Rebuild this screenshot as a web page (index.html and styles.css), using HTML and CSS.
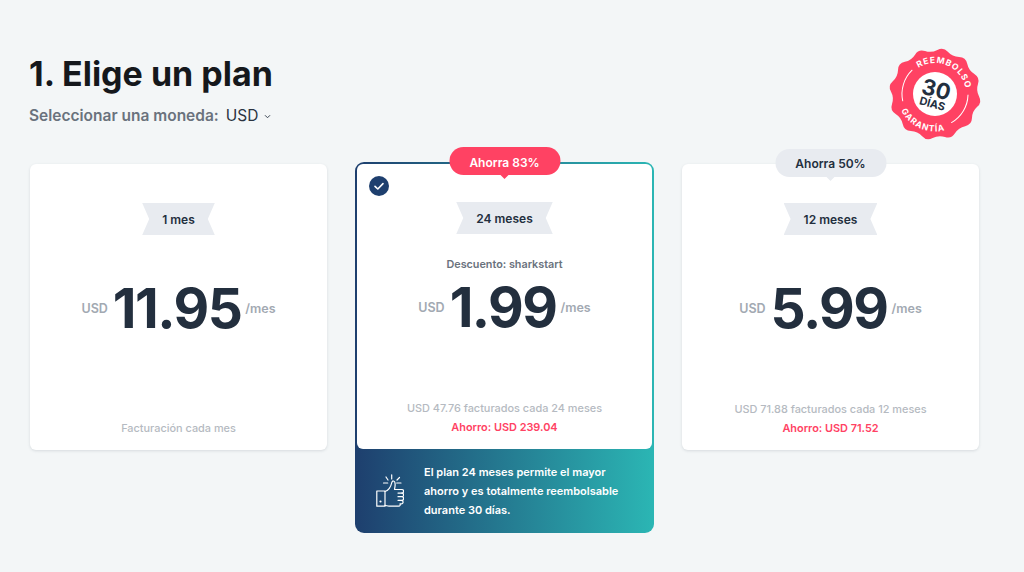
FILE: index.html
```html
<!DOCTYPE html>
<html lang="es">
<head>
<meta charset="utf-8">
<title>Elige un plan</title>
<link rel="stylesheet" href="styles.css">
</head>
<body>
<main class="page">
  <header class="head">
    <h1 class="title">1. Elige un plan</h1>
    <div class="currency">
      <span class="currency-label">Seleccionar una moneda:</span>
      <span class="currency-value">USD</span>
      <svg class="chevron" viewBox="0 0 8 6" width="7" height="5"><path d="M1 1.500 4 4.500 7 1.500" fill="none" stroke="#3a4552" stroke-width="1.200"/></svg>
    </div>
    <svg class="seal" viewBox="-50 -50 100 100" width="100" height="100">
      <path transform="rotate(10)" fill="#ff4263" d="M43.800,-5.300 Q48,0 43.800,5.300 Q39.600,10.600 40.600,17.300 Q41.600,24 35.300,26.500 Q29,29 26.500,35.300 Q24,41.600 17.300,40.600 Q10.600,39.600 5.300,43.800 Q0,48 -5.300,43.800 Q-10.600,39.600 -17.300,40.600 Q-24,41.600 -26.500,35.300 Q-29,29 -35.300,26.500 Q-41.600,24 -40.600,17.300 Q-39.600,10.600 -43.800,5.300 Q-48,0 -43.800,-5.300 Q-39.600,-10.600 -40.600,-17.300 Q-41.600,-24 -35.300,-26.500 Q-29,-29 -26.500,-35.300 Q-24,-41.600 -17.300,-40.600 Q-10.600,-39.600 -5.300,-43.800 Q0,-48 5.300,-43.800 Q10.600,-39.600 17.300,-40.600 Q24,-41.600 26.500,-35.300 Q29,-29 35.300,-26.500 Q41.600,-24 40.600,-17.300 Q39.600,-10.600 43.800,-5.300 Z"/>
      <circle r="22" fill="#fff"/>
      <g transform="rotate(24)">
        <path d="M30.600,-12.400 A33,33 0 0 1 26.700,19.400" fill="none" stroke="#fff" stroke-width="1" stroke-linecap="round"/>
        <path d="M-30.600,-12.400 A33,33 0 0 0 -26.700,19.400" fill="none" stroke="#fff" stroke-width="1" stroke-linecap="round"/>
        <defs>
          <path id="seal-top" d="M-31,0 A31,31 0 0 1 31,0"/>
          <path id="seal-bottom" d="M-37.500,0 A37.500,37.500 0 0 0 37.500,0"/>
        </defs>
        <text class="seal-ring"><textPath href="#seal-top" startOffset="50%" text-anchor="middle">REEMBOLSO</textPath></text>
        <text class="seal-ring"><textPath href="#seal-bottom" startOffset="50%" text-anchor="middle">GARANTÍA</textPath></text>
      </g>
      <g transform="rotate(15)">
        <text class="seal-num" y="3" text-anchor="middle">30</text>
        <text class="seal-days" y="14" text-anchor="middle">DÍAS</text>
      </g>
    </svg>
  </header>

  <section class="plans">
    <article class="plan">
      <div class="card">
        <div class="ribbon">1 mes</div>
        <p class="discount"></p>
        <div class="price"><span class="cur">USD</span><span class="amount">11.95</span><span class="per">/mes</span></div>
        <div class="billing">
          <p class="billed">Facturación cada mes</p>
        </div>
      </div>
    </article>

    <article class="plan plan-selected">
      <span class="pill pill-hot">Ahorra 83%</span>
      <div class="card">
        <svg class="check" viewBox="0 0 20 20" width="20" height="20"><circle cx="10" cy="10" r="10" fill="#1e3f6e"/><path d="M6 10.300 8.800 13 14 7.600" fill="none" stroke="#fff" stroke-width="1.600" stroke-linecap="round" stroke-linejoin="round"/></svg>
        <div class="ribbon">24 meses</div>
        <p class="discount">Descuento: sharkstart</p>
        <div class="price"><span class="cur">USD</span><span class="amount">1.99</span><span class="per">/mes</span></div>
        <div class="billing">
          <p class="billed">USD 47.76 facturados cada 24 meses</p>
          <p class="saving">Ahorro: USD 239.04</p>
        </div>
      </div>
      <div class="note">
        <svg class="thumb" viewBox="0 0 28 34" width="28" height="34" fill="none" stroke="#fff" stroke-width="1.200" stroke-linecap="round" stroke-linejoin="round">
          <path d="M15.700 .8v4.200M10 3l2 3M23.500 3.500 21 6M7.500 9h4.200M20.700 9H25"/>
          <path d="M.8 17H9v15.200H.8z"/>
          <path d="M9 17.500c3-.5 5.800-4.500 6.500-8 .3-1.700 1-2.700 2-2.500 1.700.3 1.800 3 1.500 5.500l-.5 3h7.300a1.800 1.800 0 0 1 0 3.600H22"/>
          <path d="M25.800 19.100a1.800 1.800 0 0 1 0 3.600H22M25.800 22.700a1.800 1.800 0 0 1 0 3.600H22M25.300 26.300a1.800 1.800 0 0 1 0 3.600H24c.6 1.300-.1 2.300-1.300 2.300H13c-1.600 0-2.500-.7-4-.8"/>
          <circle cx="4.500" cy="27.500" r=".5" fill="#fff"/>
        </svg>
        <p class="note-text">El plan 24 meses permite el mayor ahorro y es totalmente reembolsable durante 30 días.</p>
      </div>
    </article>

    <article class="plan">
      <span class="pill">Ahorra 50%</span>
      <div class="card">
        <div class="ribbon">12 meses</div>
        <p class="discount"></p>
        <div class="price"><span class="cur">USD</span><span class="amount">5.99</span><span class="per">/mes</span></div>
        <div class="billing">
          <p class="billed">USD 71.88 facturados cada 12 meses</p>
          <p class="saving">Ahorro: USD 71.52</p>
        </div>
      </div>
    </article>
  </section>
</main>
</body>
</html>
```

FILE: styles.css
```css
* { box-sizing: border-box; }
html, body { margin: 0; height: 100%; }
body {
  background: #f3f6f7;
  font-family: Inter, "Liberation Sans", sans-serif;
  color: #232f3e;
  overflow: hidden;
}
p { margin: 0; }
.page { padding: 54px 44px 0 30px; }
.head { position: relative; height: 110px; }
.title {
  margin: 0 0 0 -1px;
  font-size: 34px;
  line-height: 40px;
  font-weight: 700;
  color: #15181c;
}
.currency {
  display: flex;
  align-items: center;
  margin-top: 12px;
  margin-left: -1px;
  line-height: 20px;
}
.currency-label { font-size: 15.500px; font-weight: 600; color: #6a727d; }
.currency-value { font-size: 15.500px; font-weight: 400; color: #2a3340; margin-left: 7px; }
.chevron { margin-left: 6px; }
.seal { position: absolute; right: -5px; top: -10px; overflow: visible; }
.seal-ring { font: 700 8.500px Inter, sans-serif; fill: #fff; letter-spacing: .9px; }
.seal-num { font: 700 22px Inter, sans-serif; fill: #232f3e; }
.seal-days { font: 700 11px Inter, sans-serif; fill: #232f3e; }

.plans {
  display: grid;
  grid-template-columns: 297px 299px 297px;
  column-gap: 28px;
  align-items: start;
}
.plan { position: relative; }
.card {
  position: relative;
  display: flex;
  flex-direction: column;
  align-items: center;
  height: 286px;
  padding: 39px 0 12px;
  background: #fff;
  border-radius: 6px;
  box-shadow: 0 1px 3px rgba(40, 60, 80, .14);
}
.plan-selected {
  margin-top: -2px;
  padding: 2px 2px 0;
  border-radius: 9px;
  background: linear-gradient(90deg, #1e3f6e, #2bb6b4);
}
.plan-selected .card { box-shadow: none; height: 285px; padding-top: 38px; }
.ribbon {
  display: flex;
  align-items: center;
  justify-content: center;
  height: 32px;
  padding: 1px 20px 0;
  background: #e8ebf0;
  font-size: 12px;
  font-weight: 600;
  color: #232f3e;
  clip-path: polygon(0 0, 100% 0, calc(100% - 7px) 50%, 100% 100%, 0 100%, 7px 50%);
}
.discount {
  height: 15px;
  margin-top: 22.500px;
  font-size: 10.800px;
  line-height: 15px;
  font-weight: 600;
  color: #6a727d;
}
.price {
  display: flex;
  align-items: center;
  gap: 5px;
  height: 60px;
  margin-top: 5.500px;
}
.cur, .per { font-size: 12.500px; font-weight: 600; color: #a2a9b2; }
.per { margin-left: -1px; }
.amount { font-size: 55px; font-weight: 700; letter-spacing: -1.500px; line-height: 60px; color: #232f3e; }
.billing { margin-top: auto; text-align: center; font-size: 10.900px; font-weight: 500; line-height: 19px; }
.billed { color: #b5bac1; }
.saving { color: #ff4263; font-weight: 600; }
.pill {
  position: absolute;
  z-index: 2;
  top: -15px;
  left: 50%;
  transform: translateX(-50%);
  width: 111px;
  height: 28px;
  border-radius: 14px;
  background: #e8ebf0;
  text-align: center;
  font-size: 12px;
  font-weight: 600;
  line-height: 29px;
  color: #232f3e;
}
.pill::after {
  content: "";
  position: absolute;
  left: 50%;
  bottom: -4px;
  margin-left: -5px;
  border: solid transparent;
  border-width: 5px 5px 0;
  border-top-color: #e8ebf0;
}
.pill-hot { background: #ff4263; color: #fff; line-height: 31px; }
.pill-hot::after { border-top-color: #ff4263; }
.check { position: absolute; left: 12px; top: 12px; }
.note {
  display: flex;
  align-items: center;
  gap: 20px;
  height: 84px;
  padding: 0 24px 0 19px;
  color: #fff;
}
.thumb { flex: none; }
.note-text { font-size: 11px; line-height: 19px; font-weight: 600; color: #fff; }
```
